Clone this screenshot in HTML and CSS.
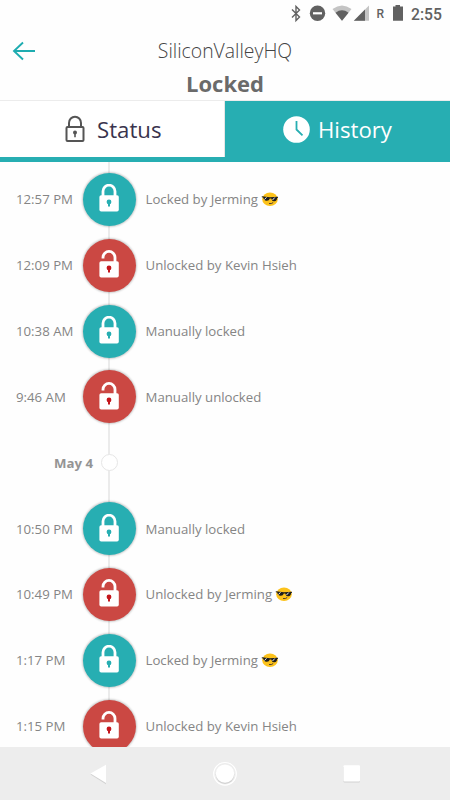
FILE: index.html
```html
<!DOCTYPE html>
<html lang="en">
<head>
<meta charset="utf-8">
<title>SiliconValleyHQ</title>
<link rel="stylesheet" href="styles.css">
</head>
<body>
<svg class="defs" width="0" height="0">
  <symbol id="locked" viewBox="0 0 20 28">
    <path d="M4 13V7.200a6 6 0 0 1 12 0V13" fill="none" stroke="#fff" stroke-width="2.800"/>
    <rect x="0.400" y="11.300" width="19.400" height="16.200" rx="1.800" fill="#fff"/>
    <circle cx="10" cy="18" r="2.400" fill="#27aeb2"/><path d="M9 18h2v4.600H9z" fill="#27aeb2"/>
  </symbol>
  <symbol id="unlocked" viewBox="0 0 20 28">
    <path d="M4 8.600V7.400a6 6 0 0 1 12 0V13" fill="none" stroke="#fff" stroke-width="2.800"/>
    <rect x="0.400" y="11.300" width="19.400" height="16.200" rx="1.800" fill="#fff"/>
    <circle cx="10" cy="18" r="2.400" fill="#c4161c"/><path d="M9 18h2v4.600H9z" fill="#c4161c"/>
  </symbol>
  <symbol id="cool" viewBox="0 0 18 16">
    <ellipse cx="9" cy="8.300" rx="7.800" ry="6.700" fill="#fcc21b"/>
    <path d="M.8 5.200 9 6.300l8-.6v1l-.8.300q-.3 3-2.700 3.200-2.600.2-3.300-2.700l-1.400-.1Q8 10 5.500 9.700 2.700 9.400 2.200 6.500L.8 6.200z" fill="#1d1d1d"/>
    <path d="M3.500 8.500 5.500 6.300M11.500 9 13.800 6.500" stroke="#eee" stroke-width="1"/>
    <path d="M8 12.500q2.500.6 4.200-1" fill="none" stroke="#513f35" stroke-width="1"/>
  </symbol>
</svg>
<div class="screen">
  <div class="statusbar">
    <svg class="sysicons" viewBox="280 0 170 28">
      <path d="M292 9.500 299.500 17 296 20.500V6.500L299.500 10 292 17.500" fill="none" stroke="#616161" stroke-width="1.400"/>
      <circle cx="317.500" cy="13.300" r="7.700" fill="#616161"/><path d="M313 12.200h9v2.200h-9z" fill="#fff"/>
      <path d="M332.500 9Q342 2 351.500 9L342 20.800z" fill="#c4c4c4"/><path d="M335.500 12.700Q342 8 348.500 12.700L342 20.800z" fill="#616161"/>
      <path d="M369 5.500v15.200h-15.200z" fill="#c4c4c4"/><path d="M365 9.500v11.200h-11.200z" fill="#616161"/>
      <path d="M395.500 5h4.500v1.500h3v14.200h-10V6.500h2.500z" fill="#616161"/>
    </svg>
    <span class="roaming">R</span><span class="clock">2:55</span>
  </div>
  <header class="header">
    <svg class="back" viewBox="0 0 24 20"><path d="M11 1.500 2 10l9 8.500M2 10h21" fill="none" stroke="#1eacb0" stroke-width="1.900"/></svg>
    <div class="titles"><div class="name">SiliconValleyHQ</div><div class="state">Locked</div></div>
  </header>
  <nav class="tabs">
    <div class="tab status">
      <svg class="tabicon lock" viewBox="0 0 20 28"><path d="M4 12V8a6 6.300 0 0 1 12 0v4" fill="none" stroke="#555" stroke-width="2"/><rect x="1.500" y="12" width="17" height="14" rx="1" fill="none" stroke="#555" stroke-width="2"/><circle cx="10" cy="17.500" r="2" fill="#555"/><path d="M9.200 18h1.600v4.300H9.200z" fill="#555"/></svg>
      <span>Status</span>
    </div>
    <div class="tab history">
      <svg class="tabicon time" viewBox="0 0 27 27"><circle cx="13.500" cy="13.500" r="13.300" fill="#fff"/><path d="M13.500 5v8.500l6 5.800" fill="none" stroke="#27aeb2" stroke-width="1.800"/></svg>
      <span>History</span>
    </div>
  </nav>
  <main class="timeline">
    <div class="row"><span class="when">12:57 PM</span><span class="disc teal"><svg><use href="#locked"/></svg></span><span class="what">Locked by Jerming</span><svg class="cool"><use href="#cool"/></svg></div>
    <div class="row"><span class="when">12:09 PM</span><span class="disc red"><svg><use href="#unlocked"/></svg></span><span class="what">Unlocked by Kevin Hsieh</span></div>
    <div class="row"><span class="when">10:38 AM</span><span class="disc teal"><svg><use href="#locked"/></svg></span><span class="what">Manually locked</span></div>
    <div class="row"><span class="when">9:46 AM</span><span class="disc red"><svg><use href="#unlocked"/></svg></span><span class="what">Manually unlocked</span></div>
    <div class="row"><span class="day">May 4</span><span class="dot"></span></div>
    <div class="row"><span class="when">10:50 PM</span><span class="disc teal"><svg><use href="#locked"/></svg></span><span class="what">Manually locked</span></div>
    <div class="row"><span class="when">10:49 PM</span><span class="disc red"><svg><use href="#unlocked"/></svg></span><span class="what">Unlocked by Jerming</span><svg class="cool"><use href="#cool"/></svg></div>
    <div class="row"><span class="when">1:17 PM</span><span class="disc teal"><svg><use href="#locked"/></svg></span><span class="what">Locked by Jerming</span><svg class="cool"><use href="#cool"/></svg></div>
    <div class="row"><span class="when">1:15 PM</span><span class="disc red"><svg><use href="#unlocked"/></svg></span><span class="what">Unlocked by Kevin Hsieh</span></div>
  </main>
  <footer class="navbar">
    <svg viewBox="0 0 450 53">
      <g fill="#d2d2d2"><path d="M90.500 27.500 106 19v18.300z"/><circle cx="225" cy="27.600" r="9.300"/><rect x="343.500" y="19.500" width="16.500" height="16" rx="1"/></g>
      <g fill="#fff"><path d="M90.500 26.500 106 17.800v18.200z"/><circle cx="225" cy="26.600" r="9.200"/><rect x="343.500" y="18.300" width="16.500" height="16.200" rx="1"/></g>
      <circle cx="225" cy="26.800" r="11.300" fill="none" stroke="#fff" stroke-width="1.200"/>
    </svg>
  </footer>
</div>
</body>
</html>
```
FILE: styles.css
```css
* { box-sizing: border-box; }
body { margin: 0; background: #fefefe; font-family: "Open Sans", "Noto Sans", sans-serif; }
svg { display: block; flex: none; }
.defs { position: absolute; }
.screen { width: 450px; height: 800px; display: flex; flex-direction: column; overflow: hidden; }
.statusbar { height: 28px; flex: none; position: relative; display: flex; justify-content: flex-end; align-items: center; padding-right: 9px; font-family: Roboto, sans-serif; color: #616161; font-weight: 500; }
.sysicons { position: absolute; right: 0; top: 0; width: 170px; height: 28px; }
.roaming { font-size: 12px; margin-right: 27px; }
.clock { font-size: 15.700px; width: 30px; white-space: nowrap; }
.header { height: 73px; flex: none; position: relative; border-bottom: 1px solid #ececec; text-align: center; color: #6a6a6a; }
.back { position: absolute; left: 12px; top: 13px; width: 24px; height: 20px; }
.name { font-size: 19.400px; line-height: 26px; padding-top: 10px; font-weight: 300; color: #444; }
.state { font-size: 22px; line-height: 30px; padding-top: 4px; font-weight: 700; }
.tabs { height: 60.500px; flex: none; display: flex; background: #27aeb2; }
.tab { display: flex; align-items: center; height: 56px; font-size: 22.200px; font-weight: 400; }
.status { width: 225px; background: #fff; color: #39334d; padding-left: 65px; border-right: 1px solid #e6e6e6; }
.history { flex: 1; color: #fff; padding-left: 58px; }
.lock { width: 20px; height: 28px; margin-right: 12px; }
.time { width: 27px; height: 27px; margin-right: 8px; }
.timeline { flex: 1; min-height: 0; overflow: hidden; padding-top: 5px; background: linear-gradient(#ebebeb, #ebebeb) 108px 0 / 2px 100% no-repeat; }
.row { display: flex; align-items: center; height: 65.830px; font-size: 13.220px; color: #858585; white-space: nowrap; }
.when { width: 83px; padding-left: 16px; flex: none; }
.disc { width: 53px; height: 53px; border-radius: 50%; display: flex; justify-content: center; padding-top: 11.500px; padding-right: 1px; box-shadow: 0 0 2px 1px rgba(0,0,0,.2); flex: none; }
.disc svg { width: 20px; height: 28px; }
.teal { background: #27aeb2; }
.red { background: #cb4843; }
.what { margin-left: 9.500px; }
.cool { width: 18px; height: 16px; margin-left: 3px; }
.day { width: 93px; text-align: right; font-weight: 700; color: #949494; }
.dot { width: 17px; height: 17px; margin-left: 8px; border: 1px solid #e6e6e6; border-radius: 50%; background: #fff; }
.navbar { height: 53px; flex: none; background: #ededed; }
.navbar svg { width: 450px; height: 53px; }
```
